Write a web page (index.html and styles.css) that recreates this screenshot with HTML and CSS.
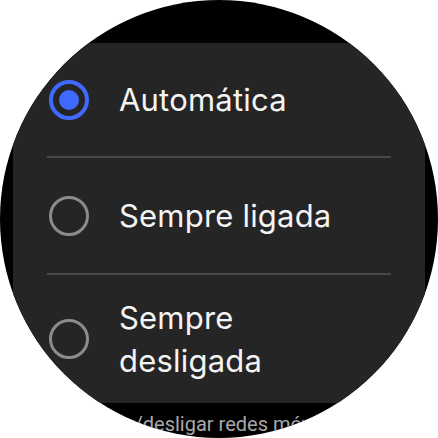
FILE: index.html
```html
<!DOCTYPE html>
<html>
<head>
<meta charset="utf-8">
<link rel="stylesheet" href="styles.css">
</head>
<body>
<div class="watch">
  <div class="card">
    <div class="row row-first">
      <span class="radio radio-on"><span class="dot"></span></span>
      <span class="label">Automática</span>
    </div>
    <div class="divider"></div>
    <div class="row row-second">
      <span class="radio"></span>
      <span class="label">Sempre ligada</span>
    </div>
    <div class="divider"></div>
    <div class="row row-third">
      <span class="radio"></span>
      <span class="label">Sempre<br>desligada</span>
    </div>
  </div>
  <div class="footer">Ligar/desligar redes móveis</div>
</div>
</body>
</html>
```
FILE: styles.css
```css
html, body {
  margin: 0;
  padding: 0;
  background: #ffffff;
}
.watch {
  width: 438px;
  height: 438px;
  border-radius: 50%;
  overflow: hidden;
  background: #000000;
  display: flex;
  flex-direction: column;
  align-items: stretch;
  padding-top: 43px;
  box-sizing: border-box;
  font-family: "Inter", "Roboto", sans-serif;
}
.card {
  margin: 0 13px;
  background: #252525;
  height: 360px;
  display: flex;
  flex-direction: column;
}
.row {
  display: flex;
  align-items: center;
  padding-left: 36px;
  gap: 30px;
}
.row-first { height: 114px; }
.row-second { height: 115px; }
.row-third { height: 129px; }
.divider {
  height: 2px;
  background: #48484c;
  margin: 0 34px;
}
.radio {
  width: 40px;
  height: 40px;
  box-sizing: border-box;
  border-radius: 50%;
  border: 3px solid #8c8c8c;
  flex: none;
  display: flex;
  align-items: center;
  justify-content: center;
}
.radio-on {
  border: 4px solid #4069ff;
}
.dot {
  width: 20px;
  height: 20px;
  border-radius: 50%;
  background: #4069ff;
}
.label {
  color: #f4f4f4;
  font-size: 31px;
  line-height: 43px;
  letter-spacing: 0.2px;
}
.footer {
  color: #a8a8a8;
  font-size: 20px;
  margin-top: 9px;
  padding-left: 90px;
  white-space: nowrap;
  font-family: "Roboto", sans-serif;
}
```
